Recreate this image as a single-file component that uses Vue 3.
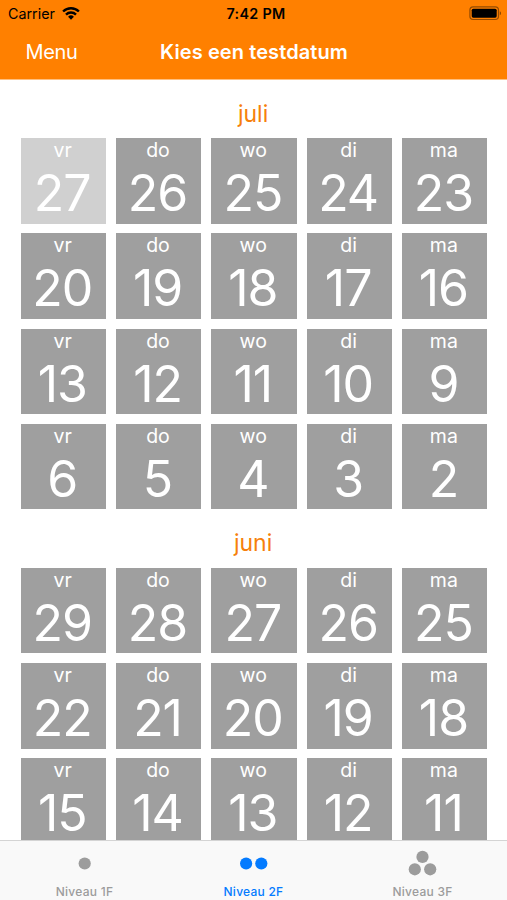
<script setup>
const weekdays = ['vr', 'do', 'wo', 'di', 'ma']
const months = [
  { name: 'juli', weeks: [[27, 26, 25, 24, 23], [20, 19, 18, 17, 16], [13, 12, 11, 10, 9], [6, 5, 4, 3, 2]] },
  { name: 'juni', weeks: [[29, 28, 27, 26, 25], [22, 21, 20, 19, 18], [15, 14, 13, 12, 11]] },
]
const tabs = [
  { label: 'Niveau 1F', dots: [[19.7, 15.5]] },
  { label: 'Niveau 2F', dots: [[12.1, 15.5], [27.3, 15.5]], active: true },
  { label: 'Niveau 3F', dots: [[19.5, 8.9], [11.8, 21.3], [27.2, 21.3]] },
]
const isUsed = (m, w, d) => m === 0 && w === 0 && d === 0
</script>

<template>
  <div class="screen">
    <header class="header">
      <div class="status">
        <div class="carrier">
          <span>Carrier</span>
          <svg class="wifi" width="18" height="14" viewBox="0 0 18 14">
            <g fill="none" stroke="#000" stroke-width="2.4">
              <path d="M1.1 4.5a11.2 11.2 0 0 1 15.8 0" />
              <path d="M4 7.6a7 7 0 0 1 10 0" />
            </g>
            <path d="M9 12.8 6.1 9.8a4.1 4.1 0 0 1 5.8 0z" />
          </svg>
        </div>
        <div class="time">7:42 PM</div>
        <div class="battery">
          <svg width="33" height="15" viewBox="0 0 33 15">
            <rect x=".9" y=".9" width="28.6" height="12.6" rx="3.2" fill="none" stroke="#000" stroke-opacity=".42" stroke-width="1.2" />
            <rect x="2.7" y="2.7" width="25" height="9" rx="1.6" />
            <path d="M30.8 5.2c1.7.6 1.7 3.4 0 4z" fill-opacity=".45" />
          </svg>
        </div>
      </div>
      <nav class="navbar">
        <span class="menu">Menu</span>
        <h1 class="title">Kies een testdatum</h1>
        <span></span>
      </nav>
    </header>

    <main class="content">
      <section v-for="(month, m) in months" :key="month.name" class="month">
        <h2 class="month-name">{{ month.name }}</h2>
        <div class="grid">
          <template v-for="(week, w) in month.weeks" :key="w">
            <div v-for="(day, d) in week" :key="day" class="tile" :class="{ used: isUsed(m, w, d) }">
              <span class="weekday">{{ weekdays[d] }}</span>
              <span class="number">{{ day }}</span>
            </div>
          </template>
        </div>
      </section>
    </main>

    <footer class="tabbar">
      <div v-for="tab in tabs" :key="tab.label" class="tab" :class="{ active: tab.active }">
        <svg width="40" height="32" viewBox="0 0 40 32" fill="currentColor">
          <circle v-for="([x, y], i) in tab.dots" :key="i" :cx="x" :cy="y" r="6.1" />
        </svg>
        <span class="tab-label">{{ tab.label }}</span>
      </div>
    </footer>
  </div>
</template>

<style>
body {
  margin: 0;
  background: #fff;
}
</style>

<style scoped>
.screen {
  display: flex;
  flex-direction: column;
  width: 507px;
  height: 900px;
  overflow: hidden;
  background: #fff;
  font-family: Inter, "Liberation Sans", sans-serif;
}
.header {
  flex: none;
  height: 79.5px;
  box-sizing: border-box;
  background: #ff8000;
  border-bottom: 1px solid #ffc080;
}
.status {
  display: grid;
  grid-template-columns: 1fr auto 1fr;
  align-items: center;
  height: 27px;
  padding: 0 5px 0 8px;
  font-size: 14.3px;
  color: #000;
}
.carrier {
  display: flex;
  align-items: center;
  gap: 7px;
}
.time {
  padding-left: 2px;
  font-weight: 600;
  letter-spacing: 0.3px;
}
.battery {
  display: flex;
  justify-content: flex-end;
}
.navbar {
  display: grid;
  grid-template-columns: 1fr auto 1fr;
  align-items: center;
  height: 50px;
  padding: 0 25px;
  color: #fff;
}
.menu {
  padding-left: 0.5px;
  font-size: 20px;
  letter-spacing: -0.35px;
}
.title {
  margin: 0;
  padding-left: 1px;
  font-size: 20px;
  font-weight: 600;
  letter-spacing: 0.1px;
}
.content {
  flex: 1;
  min-height: 0;
  overflow: hidden;
  padding: 0 19.7px 0 20.6px;
}
.month-name {
  margin: 0;
  height: 58.5px;
  line-height: 68px;
  padding-right: 1.8px;
  font-size: 23px;
  font-weight: 400;
  text-align: center;
  color: #f6800b;
}
.grid {
  display: grid;
  grid-template-columns: repeat(5, 1fr);
  grid-auto-rows: 85.5px;
  gap: 9.8px;
}
.tile {
  display: flex;
  flex-direction: column;
  align-items: center;
  background: #9f9f9f;
  color: #fff;
}
.tile.used {
  background: #d0d0d0;
}
.weekday {
  height: 25px;
  line-height: 25px;
  padding-right: 1.4px;
  font-size: 19.5px;
}
.number {
  height: 60px;
  line-height: 60px;
  padding-right: 2.2px;
  font-size: 50px;
  letter-spacing: -1px;
}
.tabbar {
  display: grid;
  grid-template-columns: repeat(3, 1fr);
  flex: none;
  height: 60px;
  box-sizing: border-box;
  border-top: 1px solid #d4d4d4;
  background: #f9f9f9;
}
.tab {
  display: flex;
  flex-direction: column;
  align-items: center;
  padding-top: 7px;
  color: #9c9c9c;
}
.tab.active {
  color: #047bff;
}
.tab-label {
  margin-top: 4px;
  line-height: 16px;
  font-size: 12px;
  font-weight: 500;
  letter-spacing: 0.25px;
}
</style>
